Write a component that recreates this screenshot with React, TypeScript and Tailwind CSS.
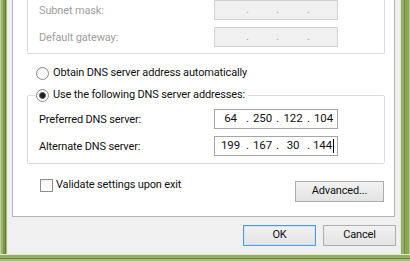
import React from 'react';

const font = "font-['Roboto','Noto_Sans',sans-serif]";
const txt = 'text-[11px] tracking-[-0.15px]';

function IpBox({ parts, disabled, cursor }: { parts: string[]; disabled?: boolean; cursor?: boolean }) {
  const widths = ['w-[31px]', 'w-[27px]', 'w-[28px]', 'flex-1'];
  return (
    <div
      className={`flex h-[20px] w-[124px] items-center border text-[11.5px] leading-none ${
        disabled ? 'border-[#d2d2d2] bg-[#f0f0f0] text-[#a8a8a8]' : 'border-[#a6a6a6] bg-white text-[#111]'
      }`}
    >
      {parts.map((p, i) => (
        <React.Fragment key={i}>
          <div className={`${widths[i]} flex h-full items-center justify-center`}>
            <span>{p}</span>
            {cursor && i === 3 && <span className="ml-px h-[14px] w-px bg-black" />}
          </div>
          {i < 3 && <div className="flex w-[3px] justify-center">.</div>}
        </React.Fragment>
      ))}
    </div>
  );
}

function Radio({ checked }: { checked?: boolean }) {
  return (
    <div className="flex h-[13px] w-[13px] shrink-0 items-center justify-center rounded-full border border-[#8c8c8c] bg-gradient-to-b from-[#f4f4f4] to-white">
      {checked && <div className="h-[7px] w-[7px] rounded-full border border-[#5a5a5a] bg-[#1c1c1c]" />}
    </div>
  );
}

function Button({ label, primary, width }: { label: string; primary?: boolean; width: string }) {
  return (
    <div
      className={`flex h-[21px] ${width} items-center justify-center border bg-gradient-to-b from-[#f2f2f2] to-[#e3e3e3] ${txt} text-[#111] ${
        primary ? 'border-[#4d9be6] shadow-[inset_0_0_0_1px_#cfe4f8]' : 'border-[#adadad]'
      }`}
    >
      {label}
    </div>
  );
}

export default function App() {
  return (
    <div className={`flex h-[261px] w-[410px] flex-col overflow-hidden ${font}`}>
      <div className="flex min-h-0 flex-1">
        {/* left window frame */}
        <div className="flex w-[8px]">
          <div className="w-px bg-[#c3d2a2]" />
          <div className="w-[2px] bg-[#9bb26b]" />
          <div className="w-[2px] bg-[#7c9748]" />
          <div className="w-px bg-[#627c31]" />
          <div className="w-px bg-[#a9bd80]" />
          <div className="w-px bg-[#e4ebd6]" />
        </div>

        {/* dialog body */}
        <div className="flex flex-1 flex-col bg-[#f0f0f0]">
          <div className="ml-[4px] mr-[5px] h-[217px] border-x border-b border-[#b4b4b4] bg-white">
            {/* IP address group (top cut off) */}
            <div className="ml-[14px] mr-[9px] flex flex-col gap-[7px] rounded-b-[2px] border-x border-b border-[#dcdcdc] pb-[6px] pl-[11px]">
              <div className={`flex items-center ${txt} text-[#a0a0a0]`}>
                <span className="w-[175px] pt-[2px]">Subnet mask:</span>
                <IpBox parts={['', '', '', '']} disabled />
              </div>
              <div className={`flex items-center ${txt} text-[#a0a0a0]`}>
                <span className="w-[175px] pt-[2px]">Default gateway:</span>
                <IpBox parts={['', '', '', '']} disabled />
              </div>
            </div>

            <div className={`ml-[23px] mt-[11px] flex h-[16px] items-center gap-[4px] ${txt} text-[#111]`}>
              <Radio />
              <span>Obtain DNS server address automatically</span>
            </div>

            {/* DNS group */}
            <div className="ml-[14px] mr-[9px] mt-[14px] flex flex-col rounded-[2px] border border-[#dcdcdc] pb-[7px]">
              <div className={`-mt-[9px] ml-[7px] flex h-[16px] w-fit items-center gap-[4px] bg-white pl-px pr-[3px] ${txt} text-[#111]`}>
                <Radio checked />
                <span>Use the following DNS server addresses:</span>
              </div>
              <div className="mt-[6px] flex flex-col gap-[7px] pl-[11px]">
                <div className={`flex items-center ${txt} text-[#111]`}>
                  <span className="w-[175px] pt-[2px]">Preferred DNS server:</span>
                  <IpBox parts={['64', '250', '122', '104']} />
                </div>
                <div className={`flex items-center ${txt} text-[#111]`}>
                  <span className="w-[175px] pt-[2px]">Alternate DNS server:</span>
                  <IpBox parts={['199', '167', '30', '144']} cursor />
                </div>
              </div>
            </div>

            <div className="ml-[27px] mr-[10px] mt-[15px] flex items-start justify-between">
              <div className={`flex h-[13px] items-center gap-[3px] ${txt} text-[#111]`}>
                <div className="h-[13px] w-[13px] border border-[#8c8c8c] bg-gradient-to-b from-[#f4f4f4] to-white" />
                <span>Validate settings upon exit</span>
              </div>
              <div className="mt-[2px]">
                <Button label="Advanced..." width="w-[89px]" />
              </div>
            </div>
          </div>

          <div className="mr-[4px] mt-[8px] flex justify-end gap-[7px]">
            <Button label="OK" primary width="w-[73px]" />
            <Button label="Cancel" width="w-[73px]" />
          </div>
        </div>

        {/* right window frame */}
        <div className="flex w-[10px]">
          <div className="w-px bg-[#e2eacf]" />
          <div className="w-[3px] bg-[#97ae66]" />
          <div className="w-px bg-[#6f8a3d]" />
          <div className="w-[4px] bg-[#8ca65a]" />
          <div className="w-px bg-[#b8ca94]" />
        </div>
      </div>

      {/* bottom window frame */}
      <div className="flex h-[7px] flex-col">
        <div className="h-px bg-[#e0e8cd]" />
        <div className="h-[3px] bg-[#97ae66]" />
        <div className="h-px bg-[#6c883a]" />
        <div className="h-[2px] bg-[#a6bb7d]" />
      </div>
    </div>
  );
}
